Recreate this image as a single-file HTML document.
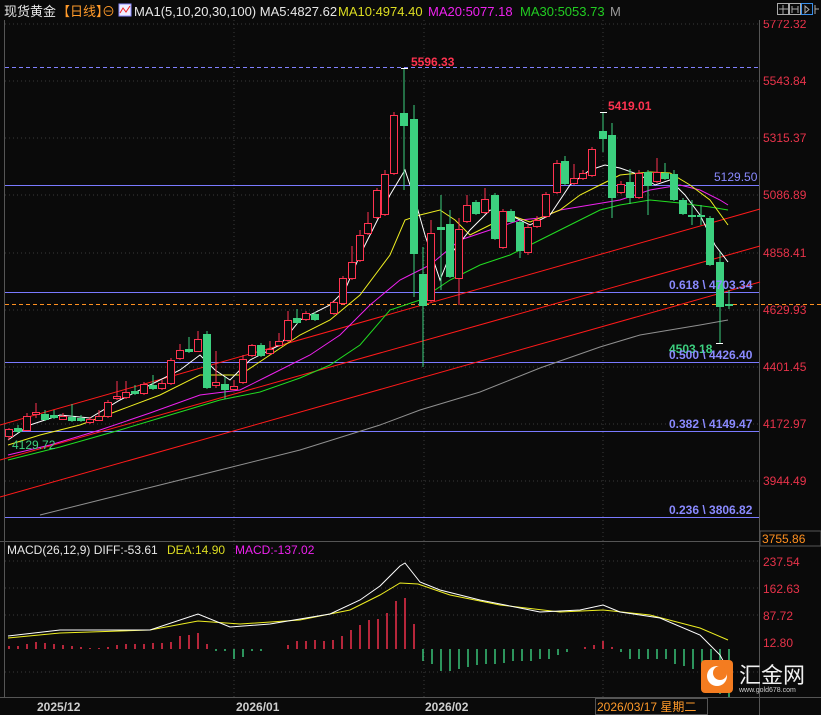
<!DOCTYPE html>
<html><head><meta charset="utf-8"><style>
html,body{margin:0;padding:0;background:#0a0a0a;width:821px;height:715px;overflow:hidden}
svg{display:block}
text{font-family:"Liberation Sans","Noto Sans CJK SC",sans-serif}
</style></head><body>
<svg width="821" height="715" viewBox="0 0 821 715" xmlns="http://www.w3.org/2000/svg">
<rect width="821" height="715" fill="#0a0a0a"/>
<!-- grid -->
<g stroke="#3a3a3a" stroke-dasharray="1,3" stroke-width="1">
<line x1="5" y1="24" x2="759" y2="24"/><line x1="5" y1="81" x2="759" y2="81"/><line x1="5" y1="138" x2="759" y2="138"/><line x1="5" y1="195" x2="759" y2="195"/><line x1="5" y1="253" x2="759" y2="253"/><line x1="5" y1="310" x2="759" y2="310"/><line x1="5" y1="367" x2="759" y2="367"/><line x1="5" y1="424" x2="759" y2="424"/><line x1="5" y1="481" x2="759" y2="481"/>
<line x1="5" y1="561" x2="759" y2="561"/><line x1="5" y1="588" x2="759" y2="588"/><line x1="5" y1="615" x2="759" y2="615"/><line x1="5" y1="672" x2="759" y2="672"/>
<line x1="234" y1="20" x2="234" y2="697"/><line x1="424" y1="20" x2="424" y2="697"/><line x1="603" y1="20" x2="603" y2="697"/>
</g>
<!-- axes -->
<g stroke="#555" stroke-width="1">
<line x1="4.5" y1="20" x2="4.5" y2="697"/><line x1="759.5" y1="20" x2="759.5" y2="715"/>
<line x1="0" y1="541.5" x2="821" y2="541.5"/><line x1="0" y1="697.5" x2="821" y2="697.5"/>
</g>
<!-- horizontal fib lines -->
<g stroke="#7a7aff" stroke-width="1">
<line x1="5" y1="185.5" x2="759" y2="185.5"/><line x1="5" y1="292.5" x2="759" y2="292.5"/><line x1="5" y1="362.5" x2="759" y2="362.5"/><line x1="5" y1="431.5" x2="759" y2="431.5"/><line x1="5" y1="517.5" x2="759" y2="517.5"/>
</g>
<line x1="5" y1="67.5" x2="759" y2="67.5" stroke="#8080ff" stroke-dasharray="4,3"/>
<line x1="5" y1="304.5" x2="821" y2="304.5" stroke="#ff9020" stroke-dasharray="4,3"/>
<!-- red trend lines -->
<g stroke="#ff1a1a" stroke-width="1">
<line x1="0" y1="425" x2="760" y2="209"/><line x1="0" y1="460" x2="760" y2="246"/><line x1="0" y1="497" x2="760" y2="282"/>
</g>
<!-- MAs -->
<g fill="none" stroke-width="1">
<polyline stroke="#909090" points="40,515 100,500 160,485 220,470 300,450 380,425 420,410 480,392 540,368 600,347 640,335 700,325 728,320"/>
<polyline stroke="#22dd22" points="8,460 60,447 120,430 170,415 220,400 260,392 300,378 330,365 360,345 390,310 420,300 450,280 480,265 510,255 540,240 570,225 600,210 620,205 650,200 680,203 710,207 728,210"/>
<polyline stroke="#ee22ee" points="8,455 50,445 100,430 150,413 200,395 240,390 270,375 310,355 340,335 370,305 400,280 410,275 430,265 460,240 490,230 520,220 540,218 560,210 590,205 620,200 650,190 680,185 700,190 720,200 728,205"/>
<polyline stroke="#eeee22" points="8,445 40,435 80,425 120,410 160,395 200,375 240,375 270,355 300,335 330,320 360,295 390,255 405,220 420,215 440,210 455,220 470,235 490,225 510,215 530,222 560,210 580,195 600,185 620,175 650,172 670,173 690,185 710,200 728,225"/>
<polyline stroke="#ffffff" points="8,440 30,425 60,415 90,418 120,400 150,385 180,370 200,355 215,370 230,380 250,360 280,345 300,320 330,305 345,290 360,255 375,225 390,195 405,170 415,200 425,235 440,280 450,255 470,230 490,210 510,215 530,225 550,215 570,185 590,170 605,165 620,168 640,175 655,185 670,180 685,195 700,215 715,245 728,262"/>
</g>
<!-- red candles -->
<g stroke="#ff3350" fill="#0a0a0a" stroke-width="1">
<line x1="9" y1="428" x2="9" y2="440"/><rect x="5.5" y="429.5" width="7" height="7"/>
<line x1="27" y1="413" x2="27" y2="431"/><rect x="23.5" y="416.5" width="7" height="14"/>
<line x1="36" y1="403" x2="36" y2="418"/><rect x="32.5" y="412.5" width="7" height="2"/>
<line x1="63" y1="413" x2="63" y2="420"/><rect x="59.5" y="416.5" width="7" height="3"/>
<line x1="90" y1="417" x2="90" y2="424"/><rect x="86.5" y="419.5" width="7" height="3"/>
<line x1="99" y1="410" x2="99" y2="421"/><rect x="95.5" y="416.5" width="7" height="4"/>
<line x1="108" y1="400" x2="108" y2="418"/><rect x="104.5" y="402.5" width="7" height="14"/>
<line x1="117" y1="381" x2="117" y2="400"/><rect x="113.5" y="396.5" width="7" height="2"/>
<line x1="126" y1="381" x2="126" y2="399"/><rect x="122.5" y="392.5" width="7" height="5"/>
<line x1="144" y1="382" x2="144" y2="395"/><rect x="140.5" y="384.5" width="7" height="9"/>
<line x1="162" y1="380" x2="162" y2="390"/><rect x="158.5" y="383.5" width="7" height="5"/>
<line x1="171" y1="358" x2="171" y2="385"/><rect x="167.5" y="360.5" width="7" height="23"/>
<line x1="180" y1="344" x2="180" y2="360"/><rect x="176.5" y="350.5" width="7" height="8"/>
<line x1="198" y1="331" x2="198" y2="352"/><rect x="194.5" y="339.5" width="7" height="12"/>
<line x1="216" y1="351" x2="216" y2="388"/><rect x="212.5" y="382.5" width="7" height="3"/>
<line x1="234" y1="380" x2="234" y2="390"/><rect x="230.5" y="386.5" width="7" height="3"/>
<line x1="243" y1="355" x2="243" y2="384"/><rect x="239.5" y="359.5" width="7" height="23"/>
<line x1="252" y1="344" x2="252" y2="357"/><rect x="248.5" y="345.5" width="7" height="10"/>
<line x1="270" y1="341" x2="270" y2="355"/><rect x="266.5" y="349.5" width="7" height="4"/>
<line x1="279" y1="333" x2="279" y2="347"/><rect x="275.5" y="341.5" width="7" height="4"/>
<line x1="288" y1="311" x2="288" y2="342"/><rect x="284.5" y="320.5" width="7" height="20"/>
<line x1="306" y1="311" x2="306" y2="321"/><rect x="302.5" y="313.5" width="7" height="6"/>
<line x1="334" y1="300" x2="334" y2="315"/><rect x="330.5" y="302.5" width="7" height="11"/>
<line x1="343" y1="276" x2="343" y2="305"/><rect x="339.5" y="278.5" width="7" height="25"/>
<line x1="352" y1="246" x2="352" y2="280"/><rect x="348.5" y="262.5" width="7" height="16"/>
<line x1="360" y1="230" x2="360" y2="262"/><rect x="356.5" y="235.5" width="7" height="25"/>
<line x1="368" y1="212" x2="368" y2="235"/><rect x="364.5" y="223.5" width="7" height="10"/>
<line x1="377" y1="188" x2="377" y2="219"/><rect x="373.5" y="190.5" width="7" height="27"/>
<line x1="385" y1="170" x2="385" y2="216"/><rect x="381.5" y="174.5" width="7" height="40"/>
<line x1="394" y1="112" x2="394" y2="175"/><rect x="390.5" y="115.5" width="7" height="58"/>
<line x1="431" y1="220" x2="431" y2="302"/><rect x="427.5" y="233.5" width="7" height="67"/>
<line x1="459" y1="218" x2="459" y2="305"/><rect x="455.5" y="229.5" width="7" height="49"/>
<line x1="467" y1="195" x2="467" y2="223"/><rect x="463.5" y="205.5" width="7" height="16"/>
<line x1="485" y1="188" x2="485" y2="214"/><rect x="481.5" y="199.5" width="7" height="13"/>
<line x1="503" y1="209" x2="503" y2="249"/><rect x="499.5" y="211.5" width="7" height="36"/>
<line x1="528" y1="224" x2="528" y2="255"/><rect x="524.5" y="227.5" width="7" height="25"/>
<line x1="537" y1="216" x2="537" y2="228"/><rect x="533.5" y="220.5" width="7" height="6"/>
<line x1="546" y1="192" x2="546" y2="218"/><rect x="542.5" y="194.5" width="7" height="22"/>
<line x1="557" y1="160" x2="557" y2="194"/><rect x="553.5" y="163.5" width="7" height="29"/>
<line x1="574" y1="164" x2="574" y2="185"/><rect x="570.5" y="178.5" width="7" height="5"/>
<line x1="583" y1="170" x2="583" y2="180"/><rect x="579.5" y="173.5" width="7" height="5"/>
<line x1="592" y1="147" x2="592" y2="177"/><rect x="588.5" y="149.5" width="7" height="26"/>
<line x1="621" y1="181" x2="621" y2="194"/><rect x="617.5" y="184.5" width="7" height="8"/>
<line x1="639" y1="170" x2="639" y2="199"/><rect x="635.5" y="173.5" width="7" height="24"/>
<line x1="657" y1="158" x2="657" y2="183"/><rect x="653.5" y="172.5" width="7" height="9"/>
</g>
<!-- green candles -->
<g stroke="#3cd07f" fill="#3cd07f" stroke-width="1">
<line x1="18" y1="425" x2="18" y2="433"/><rect x="14.5" y="428.5" width="7" height="3"/>
<line x1="45" y1="410" x2="45" y2="421"/><rect x="41.5" y="414.5" width="7" height="5"/>
<line x1="54" y1="410" x2="54" y2="419"/><rect x="50.5" y="415.5" width="7" height="2"/>
<line x1="72" y1="404" x2="72" y2="422"/><rect x="68.5" y="417.5" width="7" height="3"/>
<line x1="81" y1="415" x2="81" y2="422"/><rect x="77.5" y="418.5" width="7" height="2"/>
<line x1="135" y1="385" x2="135" y2="395"/><rect x="131.5" y="391.5" width="7" height="2"/>
<line x1="153" y1="375" x2="153" y2="390"/><rect x="149.5" y="385.5" width="7" height="3"/>
<line x1="189" y1="337" x2="189" y2="353"/><rect x="185.5" y="349.5" width="7" height="2"/>
<line x1="207" y1="331" x2="207" y2="389"/><rect x="203.5" y="334.5" width="7" height="53"/>
<line x1="225" y1="377" x2="225" y2="399"/><rect x="221.5" y="384.5" width="7" height="5"/>
<line x1="261" y1="343" x2="261" y2="357"/><rect x="257.5" y="345.5" width="7" height="10"/>
<line x1="297" y1="309" x2="297" y2="324"/><rect x="293.5" y="318.5" width="7" height="4"/>
<line x1="315" y1="312" x2="315" y2="321"/><rect x="311.5" y="314.5" width="7" height="5"/>
<line x1="404" y1="68" x2="404" y2="190"/><rect x="400.5" y="113.5" width="7" height="12"/>
<line x1="414" y1="105" x2="414" y2="297"/><rect x="410.5" y="119.5" width="7" height="134"/>
<line x1="423" y1="247" x2="423" y2="367"/><rect x="419.5" y="274.5" width="7" height="31"/>
<line x1="441" y1="195" x2="441" y2="290"/><rect x="437.5" y="227.5" width="7" height="2"/>
<line x1="450" y1="210" x2="450" y2="278"/><rect x="446.5" y="224.5" width="7" height="52"/>
<line x1="476" y1="200" x2="476" y2="215"/><rect x="472.5" y="202.5" width="7" height="11"/>
<line x1="495" y1="193" x2="495" y2="240"/><rect x="491.5" y="195.5" width="7" height="43"/>
<line x1="511" y1="209" x2="511" y2="223"/><rect x="507.5" y="211.5" width="7" height="10"/>
<line x1="520" y1="220" x2="520" y2="258"/><rect x="516.5" y="222.5" width="7" height="28"/>
<line x1="565" y1="156" x2="565" y2="185"/><rect x="561.5" y="161.5" width="7" height="22"/>
<line x1="603" y1="112" x2="603" y2="152"/><rect x="599.5" y="131.5" width="7" height="7"/>
<line x1="612" y1="123" x2="612" y2="218"/><rect x="608.5" y="135.5" width="7" height="62"/>
<line x1="630" y1="169" x2="630" y2="204"/><rect x="626.5" y="182.5" width="7" height="15"/>
<line x1="648" y1="170" x2="648" y2="215"/><rect x="644.5" y="172.5" width="7" height="13"/>
<line x1="665" y1="163" x2="665" y2="180"/><rect x="661.5" y="173.5" width="7" height="5"/>
<line x1="674" y1="170" x2="674" y2="201"/><rect x="670.5" y="174.5" width="7" height="25"/>
<line x1="683" y1="198" x2="683" y2="215"/><rect x="679.5" y="200.5" width="7" height="13"/>
<line x1="692" y1="200" x2="692" y2="225"/><rect x="688.5" y="215.5" width="7" height="1"/>
<line x1="701" y1="205" x2="701" y2="225"/><rect x="697.5" y="215.5" width="7" height="1"/>
<line x1="710" y1="216" x2="710" y2="266"/><rect x="706.5" y="218.5" width="7" height="46"/>
<line x1="720" y1="252" x2="720" y2="343"/><rect x="716.5" y="262.5" width="7" height="44"/>
<line x1="729" y1="290" x2="729" y2="309"/><rect x="725.5" y="304.5" width="7" height="1"/>
</g>
<g stroke="#fff"><line x1="401" y1="68.5" x2="408" y2="68.5"/><line x1="600" y1="112.5" x2="607" y2="112.5"/><line x1="716" y1="343.5" x2="723" y2="343.5"/></g>
<!-- price labels -->
<g font-size="12" font-weight="bold">
<text x="411" y="66" fill="#ff3350">5596.33</text>
<text x="608" y="110" fill="#ff3350">5419.01</text>
<text x="669" y="353" fill="#3cd07f">4503.18</text>
</g>
<g font-size="12" fill="#8a8aff">
<text x="714" y="181">5129.50</text>
<text x="669" y="289" font-weight="bold">0.618 \ 4703.34</text>
<text x="669" y="359" font-weight="bold">0.500 \ 4426.40</text>
<text x="669" y="428" font-weight="bold">0.382 \ 4149.47</text>
<text x="669" y="514" font-weight="bold">0.236 \ 3806.82</text>
</g>
<text x="12" y="449" font-size="12" fill="#3cd07f">4129.72</text>
<!-- right axis -->
<g font-size="12" fill="#e8334a">
<text x="763" y="28">5772.32</text><text x="763" y="85">5543.84</text><text x="763" y="142">5315.37</text><text x="763" y="199">5086.89</text><text x="763" y="257">4858.41</text><text x="763" y="314">4629.93</text><text x="763" y="371">4401.45</text><text x="763" y="428">4172.97</text><text x="763" y="485">3944.49</text>
<text x="763" y="566">237.54</text><text x="763" y="593">162.63</text><text x="763" y="620">87.72</text><text x="763" y="647">12.80</text>
</g>
<rect x="760" y="531" width="61" height="15" fill="#0a0a0a" stroke="#555"/>
<text x="762" y="543" font-size="12" fill="#ff9020">3755.86</text>
<!-- header -->
<rect x="0" y="0" width="821" height="20" fill="#0a0a0a"/>
<g font-size="13">
<text x="4" y="16" fill="#e8e8e8">现货黄金</text>
<text x="57" y="16" fill="#ff9a2a">【日线】</text>
<text x="102" y="16" fill="#ff9a2a">⊖</text>
<rect x="119" y="4" width="12" height="12" fill="#eef" stroke="#88f"/>
<polyline points="120,13 123,8 126,12 130,6" fill="none" stroke="#e22"/>
<text x="134" y="16" fill="#e8e8e8">MA1(5,10,20,30,100) MA5:4827.62</text>
<text x="338" y="16" fill="#dddd22">MA10:4974.40</text>
<text x="428" y="16" fill="#ee22ee">MA20:5077.18</text>
<text x="520" y="16" fill="#22cc22">MA30:5053.73</text>
<text x="610" y="16" fill="#999">M</text>
</g>
<g stroke="#aaa" fill="none">
<rect x="777.5" y="3.5" width="11" height="11"/><rect x="789.5" y="3.5" width="11" height="11"/><rect x="801.5" y="3.5" width="11" height="11" stroke="#3a8ee8"/>
<path d="M783 5v9M779 9h9M792 6v7M798 6v7M792 9h6M805 6v7l4-3.5z M815 5v9M815 9h4"/>
</g>
<!-- MACD -->
<g font-size="12">
<text x="7" y="554" fill="#e8e8e8">MACD(26,12,9) DIFF:-53.61</text>
<text x="167" y="554" fill="#dddd22">DEA:14.90</text>
<text x="235" y="554" fill="#ee22ee">MACD:-137.02</text>
</g>
<g stroke="#ff3350" stroke-width="1.4">
<path d="M9 649v-3M18 649v-3M27 649v-5M36 649v-7M45 649v-6M54 649v-5M63 649v-4M72 649v-3M81 649v-2M90 649v-1M99 649v-1M108 649v-2M117 649v-4M126 649v-5M135 649v-5M144 649v-5M153 649v-6M162 649v-6M171 649v-7M180 649v-13M189 649v-14M198 649v-16M207 649v-5M288 649v-4M297 649v-8M306 649v-8M315 649v-9M324 649v-8M333 649v-9M342 649v-13M351 649v-19M360 649v-24M369 649v-29M378 649v-30M387 649v-36M396 649v-48M405 649v-51M414 649v-25M585 649v-2M594 649v-4M603 649v-8M612 649v-2"/>
</g>
<g stroke="#3cd07f" stroke-width="1.4">
<path d="M216 649v2M225 649v2M234 649v10M243 649v8M252 649v2M261 649v2M423 649v12M432 649v15M441 649v22M450 649v22M459 649v20M468 649v18M477 649v16M486 649v15M495 649v15M504 649v14M513 649v12M522 649v12M531 649v12M540 649v10M549 649v10M558 649v6M567 649v3M621 649v3M630 649v10M639 649v10M648 649v10M657 649v10M666 649v10M675 649v15M684 649v17M693 649v20M702 649v25M711 649v35M720 649v45M729 649v48"/>
</g>
<g fill="none">
<polyline stroke="#eeee22" points="8,638 60,633 150,630 198,621 240,624 300,620 350,610 380,595 400,583 418,584 450,595 500,605 560,612 603,610 650,615 700,628 728,640"/>
<polyline stroke="#fff" points="8,636 60,630 150,630 198,614 230,627 270,624 330,614 360,600 380,586 400,566 405,563 420,582 440,590 480,600 540,612 580,610 603,605 620,612 660,618 700,635 720,655 728,670"/>
</g>
<!-- dates -->
<g font-size="12" font-weight="bold" fill="#cfcfcf">
<text x="37" y="711">2025/12</text><text x="236" y="711">2026/01</text><text x="425" y="711">2026/02</text>
</g>
<rect x="595.5" y="698.5" width="112" height="16" fill="#0a0a0a" stroke="#555"/>
<text x="597" y="711" font-size="12" fill="#ff9a2a">2026/03/17 星期二</text>
<!-- logo -->
<rect x="701" y="660" width="32" height="33" rx="4" fill="#f47c20"/>
<circle cx="717" cy="676" r="10" fill="#fff"/>
<circle cx="720" cy="673" r="7" fill="#f47c20"/>
<text x="739" y="683" font-size="22" fill="#f0f0f0">汇金网</text>
<text x="739" y="692" font-size="7" fill="#ccc">www.gold678.com</text>
</svg>
</body></html>
